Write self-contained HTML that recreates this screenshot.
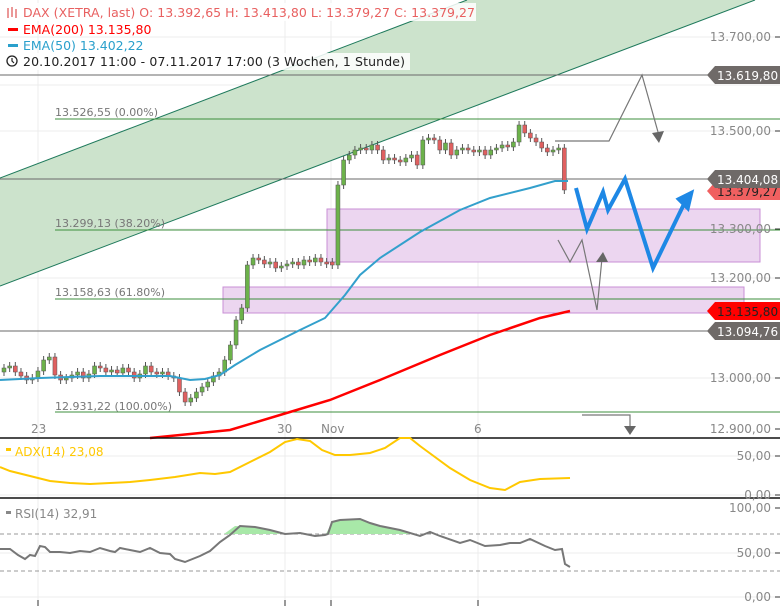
<!DOCTYPE html>
<html><head><meta charset="utf-8"><style>
body{margin:0;background:#fff;width:780px;height:606px;overflow:hidden;font-family:"Liberation Sans","DejaVu Sans",sans-serif}
svg{position:absolute;left:0;top:0}
text{font-family:"DejaVu Sans","Liberation Sans",sans-serif}
</style></head><body>
<svg id="s" width="780" height="606" viewBox="0 0 780 606">
<g stroke="#ececec" stroke-width="1">
<line x1="0" y1="37" x2="780" y2="37"/><line x1="0" y1="85" x2="780" y2="85"/><line x1="0" y1="131" x2="780" y2="131"/>
<line x1="0" y1="229" x2="780" y2="229"/><line x1="0" y1="278" x2="780" y2="278"/><line x1="0" y1="378" x2="780" y2="378"/>
<line x1="0" y1="456" x2="780" y2="456"/><line x1="0" y1="495" x2="780" y2="495"/><line x1="0" y1="553" x2="780" y2="553"/><line x1="0" y1="597" x2="780" y2="597"/>
<line x1="38" y1="0" x2="38" y2="606"/><line x1="285" y1="0" x2="285" y2="606"/><line x1="331" y1="0" x2="331" y2="606"/><line x1="478" y1="0" x2="478" y2="606"/>
</g>
<polygon points="0,178 467,0 755,0 0,286" fill="#cce3cc"/>
<line x1="0" y1="178" x2="467" y2="0" stroke="#1f7a5c" stroke-width="1"/>
<line x1="0" y1="286" x2="755" y2="0" stroke="#1f7a5c" stroke-width="1"/>
<rect x="327" y="209" width="433" height="53" fill="#ecd6f0" stroke="#c88fd6"/>
<rect x="223" y="287" width="521" height="26" fill="#ecd6f0" stroke="#c88fd6"/>
<g stroke="#3d8f3d" stroke-width="1">
<line x1="55" y1="119" x2="780" y2="119"/><line x1="55" y1="230" x2="780" y2="230"/><line x1="55" y1="299" x2="780" y2="299"/><line x1="55" y1="412" x2="780" y2="412"/>
</g>
<g stroke="#6a6a6a" stroke-width="1">
<line x1="0" y1="75" x2="780" y2="75"/><line x1="0" y1="179" x2="780" y2="179"/><line x1="0" y1="331" x2="780" y2="331"/>
</g>
<g font-size="11" fill="#777">
<text x="55" y="116">13.526,55 (0.00%)</text><text x="55" y="227">13.299,13 (38.20%)</text>
<text x="55" y="296">13.158,63 (61.80%)</text><text x="55" y="410">12.931,22 (100.00%)</text>
</g>
<g id="cand"></g>
<polyline fill="none" stroke="#ff0000" stroke-width="2.5" points="150,438 230,430 290,412 330,400 380,380 440,355 490,335 540,318 570,311"/>
<polyline fill="none" stroke="#33a0cc" stroke-width="2" points="0,380 40,378 100,376 170,376 190,380 205,379 220,375 235,365 260,350 300,330 325,318 345,295 360,275 380,258 420,232 460,210 490,198 530,188 555,181 568,181"/>
<g fill="none" stroke="#777" stroke-width="1.2">
<polyline points="555,141 609,141 642,75 658,132"/>
<polyline points="558,240 570,262 582,240 597,310 602,258"/>
<polyline points="582,415 630,415 630,428"/>
</g>
<g fill="#666"><polygon points="652,133 664,131 659,143"/><polygon points="596,262 608,262 603,252"/><polygon points="624,426 636,426 630,435"/></g>
<polyline fill="none" stroke="#1e88e5" stroke-width="4" stroke-linejoin="miter" points="576,188 587,229 603,192 608,210 625,179 653,268 684,204"/>
<polygon points="678,199 692,192 688,209" fill="#1e88e5" stroke="#1e88e5" stroke-width="3"/>
<line x1="0" y1="438" x2="780" y2="438" stroke="#111" stroke-width="1.5"/>
<line x1="0" y1="498" x2="780" y2="498" stroke="#111" stroke-width="1.5"/>
<g font-size="12" fill="#888">
<text x="31" y="433">23</text><text x="277" y="433">30</text><text x="321" y="433">Nov</text><text x="474" y="433">6</text>
</g>
<polyline fill="none" stroke="#ffc800" stroke-width="2" points="0,467 10,471 30,476 50,481 70,483 90,484 110,483 130,482 150,480 175,477 200,473 215,474 230,472 250,462 270,452 285,442 297,439 310,441 322,450 335,455 350,455 370,453 385,448 400,438 410,438 420,446 450,468 470,480 490,488 505,490 520,482 540,479 570,478"/>
<line x1="0" y1="534" x2="780" y2="534" stroke="#999" stroke-dasharray="4,3"/>
<line x1="0" y1="571" x2="780" y2="571" stroke="#999" stroke-dasharray="4,3"/>
<polygon fill="#a8e8a8" points="224,534 235,526 255,527 270,530 280,534"/>
<polygon fill="#a8e8a8" points="326,534 332,522 340,520 360,519 370,523 380,526 400,530 410,534"/>
<polyline fill="none" stroke="#777" stroke-width="2" points="0,549 10,549 18,555 25,559 30,555 35,556 40,546 45,547 50,552 60,552 70,553 80,551 90,552 100,548 110,551 115,552 120,548 130,550 140,552 150,548 160,553 170,554 175,559 185,562 190,560 200,556 210,551 220,542 230,535 240,526 255,527 270,530 285,534 300,533 315,536 325,535 328,534 332,522 340,520 360,519 370,523 380,526 400,530 420,536 430,532 440,536 460,543 470,540 485,546 500,545 510,543 520,543 530,539 545,546 555,550 562,549 565,564 570,567"/>
<g stroke="#333"><line x1="38" y1="600" x2="38" y2="606"/><line x1="285" y1="600" x2="285" y2="606"/><line x1="331" y1="600" x2="331" y2="606"/><line x1="478" y1="600" x2="478" y2="606"/></g>
<g font-size="12" fill="#888" text-anchor="end">
<text x="771" y="41">13.700,00</text><text x="771" y="135">13.500,00</text><text x="771" y="233">13.300,00</text><text x="771" y="282">13.200,00</text>
<text x="771" y="382">13.000,00</text><text x="771" y="433">12.900,00</text><text x="771" y="460">50,00</text><text x="771" y="499">0,00</text>
<text x="771" y="512">100,00</text><text x="771" y="557">50,00</text><text x="771" y="601">0,00</text>
</g>
<g stroke="#333"><line x1="775" y1="37" x2="780" y2="37"/><line x1="775" y1="131" x2="780" y2="131"/><line x1="775" y1="229" x2="780" y2="229"/><line x1="775" y1="278" x2="780" y2="278"/><line x1="775" y1="378" x2="780" y2="378"/><line x1="775" y1="429" x2="780" y2="429"/><line x1="775" y1="456" x2="780" y2="456"/><line x1="775" y1="495" x2="780" y2="495"/><line x1="775" y1="508" x2="780" y2="508"/><line x1="775" y1="553" x2="780" y2="553"/><line x1="775" y1="597" x2="780" y2="597"/></g>
<g font-size="12">
<polygon points="707,75 715,66 780,66 780,84 715,84" fill="#6f6a68"/><text x="717" y="80" fill="#fff">13.619,80</text>
<polygon points="707,191 715,182 780,182 780,200 715,200" fill="#f06060"/><text x="717" y="196" fill="#222">13.379,27</text>
<polygon points="707,179 715,170 780,170 780,188 715,188" fill="#6f6a68"/><text x="717" y="184" fill="#fff">13.404,08</text>
<polygon points="707,311 715,302 780,302 780,320 715,320" fill="#ff0000"/><text x="717" y="316" fill="#222">13.135,80</text>
<polygon points="707,331 715,322 780,322 780,340 715,340" fill="#6f6a68"/><text x="717" y="336" fill="#fff">13.094,76</text>
</g>
<rect x="0" y="3" width="476" height="18" fill="#fff" opacity="0.85"/>
<rect x="0" y="53" width="410" height="17" fill="#fff" opacity="0.85"/>
<g font-size="12.5">
<g stroke="#e06060" stroke-width="1.3"><line x1="8" y1="8" x2="8" y2="18"/><line x1="12" y1="7" x2="12" y2="17"/><line x1="16" y1="9" x2="16" y2="18"/></g>
<text x="23" y="17" fill="#e86060" textLength="452">DAX (XETRA, last)  O: 13.392,65  H: 13.413,80  L: 13.379,27  C: 13.379,27</text>
<rect x="8" y="28" width="10" height="3" fill="#ff0000"/><text x="23" y="34" fill="#ff0000">EMA(200) 13.135,80</text>
<rect x="8" y="44" width="10" height="3" fill="#2aa0cc"/><text x="23" y="50" fill="#2aa0cc">EMA(50) 13.402,22</text>
<circle cx="12" cy="61" r="5" fill="none" stroke="#222" stroke-width="1.3"/><polyline points="12,58 12,61 14,63" fill="none" stroke="#222" stroke-width="1.2"/>
<text x="23" y="66" fill="#222" textLength="382">20.10.2017 11:00 - 07.11.2017 17:00  (3 Wochen, 1 Stunde)</text>
</g>
<g font-size="12">
<rect x="6" y="448" width="5" height="3" fill="#ffc800"/><text x="15" y="456" fill="#ffc800">ADX(14)  23,08</text>
<rect x="6" y="511" width="5" height="3" fill="#888"/><text x="15" y="518" fill="#888">RSI(14)  32,91</text>
</g>
</svg>
<script>
var c=[368,366,372,376,380,378,371,360,357,375,380,378,375,372,378,374,366,368,372,370,373,368,372,378,374,366,372,374,372,376,378,392,402,398,392,387,382,376,372,360,345,320,308,265,258,260,264,262,268,266,264,262,265,260,262,258,262,262,265,185,160,155,150,148,150,145,150,160,158,160,162,158,155,165,140,138,140,150,143,155,150,148,150,152,150,155,150,148,145,147,142,125,133,138,142,148,152,150,148,190];
var g=document.getElementById('cand'),h='',p=372;
for(var i=0;i<c.length;i++){var x=2+i*5.66,o=p,cl=c[i];var t=Math.min(o,cl),b=Math.max(o,cl);if(b-t<2)b=t+2;
h+='<line x1="'+(x+2)+'" y1="'+(t-4)+'" x2="'+(x+2)+'" y2="'+(b+4)+'" stroke="#555" stroke-width="1"/>';
h+='<rect x="'+x+'" y="'+t+'" width="4" height="'+(b-t)+'" fill="'+(cl<o?'#6cb24a':'#e06060')+'" stroke="#555" stroke-width="0.5"/>';p=cl;}
g.innerHTML=h;
</script>
</body></html>
